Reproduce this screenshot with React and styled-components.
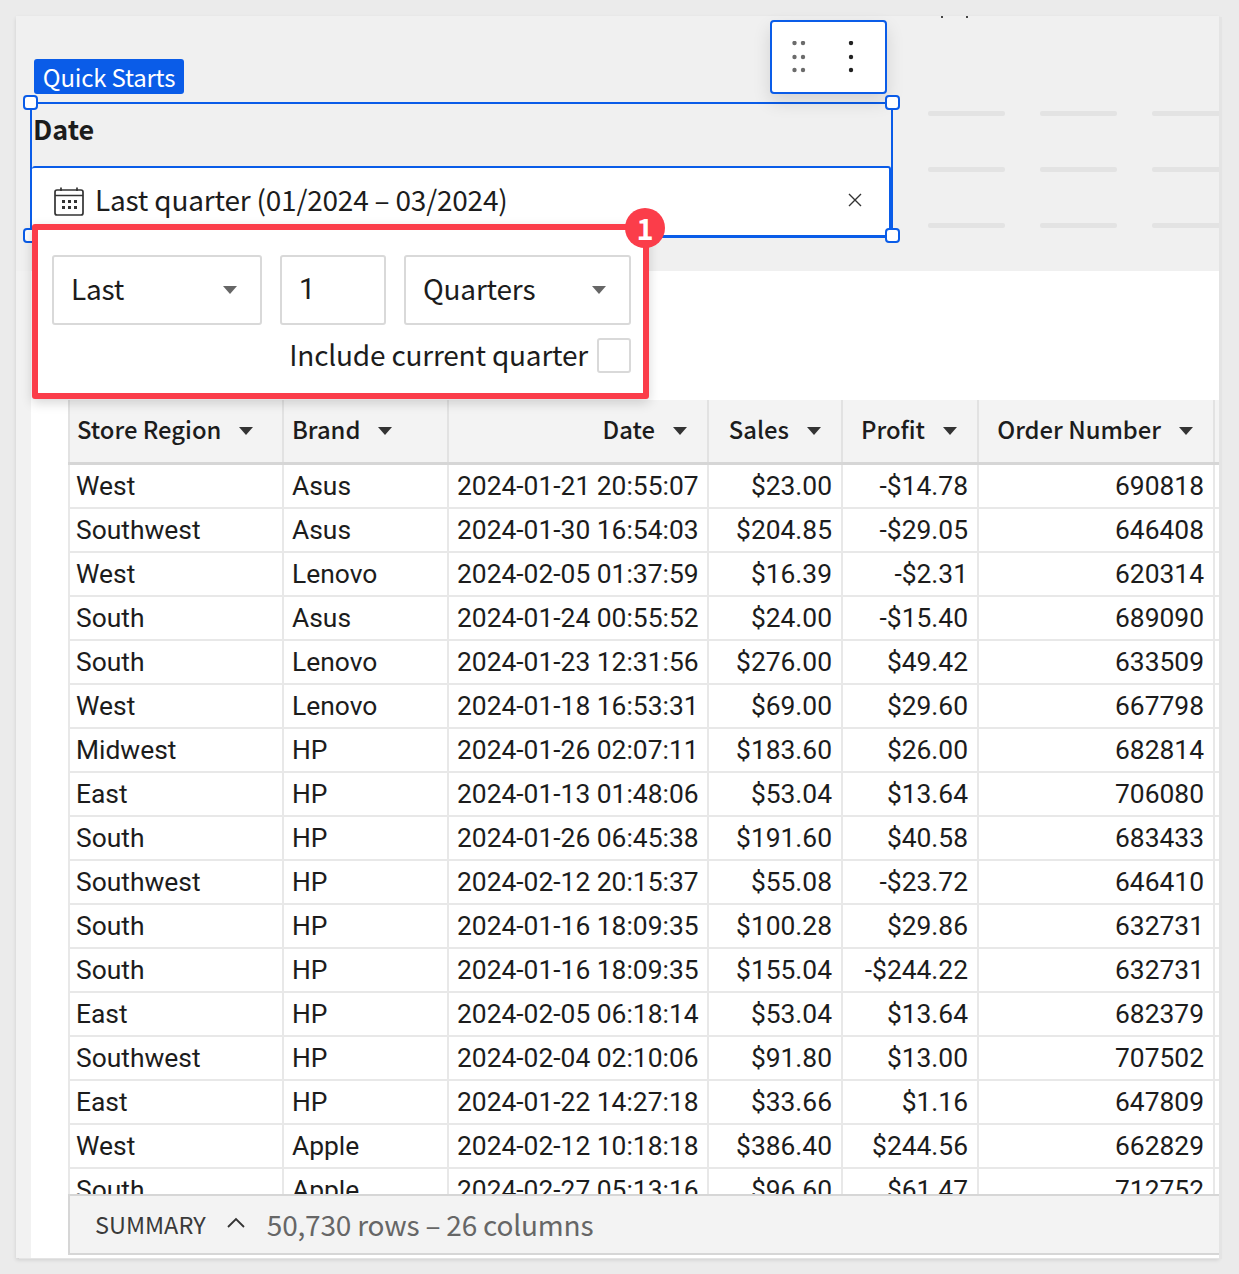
import React from "react";
import styled, { createGlobalStyle } from "styled-components";

const UI_FONT = `"Noto Sans CJK JP", "Noto Sans", sans-serif`;
const BLUE = "#0a5ce8";
const RED = "#fb3d4a";

const columns = "214px 165px 260px 134px 136px 236px 1fr";

const rows = [
  ["West", "Asus", "2024-01-21 20:55:07", "$23.00", "-$14.78", "690818"],
  ["Southwest", "Asus", "2024-01-30 16:54:03", "$204.85", "-$29.05", "646408"],
  ["West", "Lenovo", "2024-02-05 01:37:59", "$16.39", "-$2.31", "620314"],
  ["South", "Asus", "2024-01-24 00:55:52", "$24.00", "-$15.40", "689090"],
  ["South", "Lenovo", "2024-01-23 12:31:56", "$276.00", "$49.42", "633509"],
  ["West", "Lenovo", "2024-01-18 16:53:31", "$69.00", "$29.60", "667798"],
  ["Midwest", "HP", "2024-01-26 02:07:11", "$183.60", "$26.00", "682814"],
  ["East", "HP", "2024-01-13 01:48:06", "$53.04", "$13.64", "706080"],
  ["South", "HP", "2024-01-26 06:45:38", "$191.60", "$40.58", "683433"],
  ["Southwest", "HP", "2024-02-12 20:15:37", "$55.08", "-$23.72", "646410"],
  ["South", "HP", "2024-01-16 18:09:35", "$100.28", "$29.86", "632731"],
  ["South", "HP", "2024-01-16 18:09:35", "$155.04", "-$244.22", "632731"],
  ["East", "HP", "2024-02-05 06:18:14", "$53.04", "$13.64", "682379"],
  ["Southwest", "HP", "2024-02-04 02:10:06", "$91.80", "$13.00", "707502"],
  ["East", "HP", "2024-01-22 14:27:18", "$33.66", "$1.16", "647809"],
  ["West", "Apple", "2024-02-12 10:18:18", "$386.40", "$244.56", "662829"],
  ["South", "Apple", "2024-02-27 05:13:16", "$96.60", "$61.47", "712752"],
];

const headers = [
  { label: "Store Region" },
  { label: "Brand" },
  { label: "Date", right: true },
  { label: "Sales", right: true },
  { label: "Profit", right: true },
  { label: "Order Number", right: true },
];

const GlobalStyle = createGlobalStyle`
  html, body {
    margin: 0;
    padding: 0;
    background: #ebebeb;
  }
  * { box-sizing: border-box; }
`;

const Page = styled.div`
  width: 1239px;
  height: 1274px;
  padding: 16px 0 0 16px;
  font-family: ${UI_FONT};
  color: #1c1c1c;
`;

const Frame = styled.div`
  position: relative;
  width: 1203px;
  height: 1242px;
  display: flex;
  flex-direction: column;
  background: #f2f2f2;
  box-shadow: 3px 1px 0 #e4e4e4, 0 2px 4px rgba(0, 0, 0, 0.12);
`;

const Band = styled.div`
  height: 255px;
  flex-shrink: 0;
  display: flex;
  background: #f0f0f0;
  padding: 43px 0 0 14px;
  overflow: hidden;
`;

const FilterColumn = styled.div`
  width: 863px;
  flex-shrink: 0;
`;

const Tag = styled.div`
  width: 150px;
  height: 35px;
  margin-left: 4px;
  margin-bottom: 8px;
  background: ${BLUE};
  color: #fff;
  border-radius: 3px;
  font-size: 24px;
  letter-spacing: -0.2px;
  line-height: 35px;
  text-align: center;
  white-space: nowrap;
`;

const Selection = styled.div`
  position: relative;
  height: 136px;
  border: 2px solid ${BLUE};
  border-bottom: 0;
`;

const Handle = styled.div`
  position: absolute;
  width: 15px;
  height: 15px;
  background: #fff;
  border: 2px solid ${BLUE};
  border-radius: 4px;
  z-index: 2;
  ${(p) => (p.$bottom ? "bottom: -5px;" : "top: -9px;")}
  ${(p) => (p.$right ? "right: -9px;" : "left: -9px;")}
`;

const FieldLabel = styled.div`
  height: 62px;
  padding-left: 1px;
  font-size: 27px;
  font-weight: 700;
  line-height: 50px;
`;

const DateField = styled.div`
  height: 72px;
  display: flex;
  align-items: center;
  background: #fff;
  border-top: 2px solid ${BLUE};
  border-right: 2px solid ${BLUE};
  border-bottom: 3px solid ${BLUE};
  border-radius: 3px 3px 0 0;
  padding: 0 27px 0 22px;
  font-size: 28px;
  letter-spacing: -0.2px;
`;

const DateText = styled.span`
  flex: 1;
  margin: 0 0 6px 11px;
`;

const SkeletonGrid = styled.div`
  display: grid;
  grid-template-columns: repeat(3, 77px);
  column-gap: 35px;
  row-gap: 51px;
  margin: 52px 0 0 35px;
  align-content: start;
`;

const SkeletonLine = styled.div`
  width: 77px;
  height: 5px;
  background: #e3e3e3;
  border-radius: 2px;
`;

const Toolbar = styled.div`
  position: absolute;
  left: 754px;
  top: 4px;
  width: 117px;
  height: 74px;
  background: #fff;
  border: 2px solid ${BLUE};
  border-radius: 4px;
  box-shadow: 0 8px 18px rgba(0, 0, 0, 0.12);
  display: flex;
  align-items: center;
  padding-left: 20px;
  gap: 42px;
`;

const Specks = styled.div`
  position: absolute;
  left: 925px;
  top: 0;
  width: 27px;
  height: 2px;
  display: flex;
  justify-content: space-between;
`;

const Speck = styled.div`
  width: 2px;
  height: 2px;
  background: #444;
`;

const Popover = styled.div`
  position: absolute;
  left: 16px;
  top: 208px;
  width: 617px;
  height: 175px;
  padding: 25px 12px 0 14px;
  background: #fff;
  border: 6px solid ${RED};
  border-radius: 3px;
  box-shadow: 0 4px 12px rgba(0, 0, 0, 0.16);
  z-index: 3;
`;

const PopoverRow = styled.div`
  display: flex;
  gap: 18px;
`;

const Box = styled.div`
  width: ${(p) => p.$width}px;
  height: 70px;
  display: flex;
  align-items: center;
  justify-content: space-between;
  padding: 0 22px 0 17px;
  border: 2px solid #d9d9d9;
  border-radius: 3px;
`;

const BoxText = styled.span`
  font-size: 28px;
  letter-spacing: -0.2px;
  margin-bottom: 4px;
`;

const NumberText = styled.span`
  font-family: Roboto, sans-serif;
  font-size: 29px;
  margin-bottom: 2px;
`;

const CheckRow = styled.div`
  display: flex;
  justify-content: flex-end;
  align-items: center;
  gap: 9px;
  margin-top: 13px;
`;

const CheckLabel = styled.span`
  font-size: 28px;
  letter-spacing: -0.2px;
  line-height: 33px;
  margin-bottom: 2px;
`;

const CheckBox = styled.div`
  width: 34px;
  height: 35px;
  border: 2px solid #d9d9d9;
  border-radius: 3px;
`;

const Badge = styled.div`
  position: absolute;
  left: 609px;
  top: 192px;
  width: 40px;
  height: 40px;
  border-radius: 50%;
  background: ${RED};
  color: #fff;
  font-size: 29px;
  font-weight: 700;
  line-height: 39px;
  text-align: center;
  z-index: 4;
`;

const Content = styled.div`
  flex: 1;
  min-height: 0;
  margin-left: 15px;
  padding: 129px 0 3px 37px;
  background: #fff;
  display: flex;
  flex-direction: column;
`;

const TableWrap = styled.div`
  flex: 1;
  min-height: 0;
  overflow: hidden;
`;

const HeaderRow = styled.div`
  display: grid;
  grid-template-columns: ${columns};
  height: 65px;
  background: #f3f3f3;
  border-bottom: 3px solid #d6d6d6;
`;

const HeaderCell = styled.div`
  display: flex;
  align-items: center;
  justify-content: ${(p) => (p.$right ? "flex-end" : "flex-start")};
  gap: 18px;
  padding: 0 20px 0 8px;
  border-left: 2px solid #e2e2e2;
  white-space: nowrap;
  &:first-child {
    padding-left: 7px;
  }
`;

const HeaderLabel = styled.span`
  font-size: 23.8px;
  font-weight: 500;
  color: #1c1c1c;
  margin-bottom: 5px;
`;

const DataRow = styled.div`
  display: grid;
  grid-template-columns: ${columns};
  height: 44px;
  border-bottom: 2px solid #e8e8e8;
`;

const DataCell = styled.div`
  padding: 0 ${(p) => (p.$right ? "9px" : "8px")} 0 8px;
  border-left: 2px solid #e8e8e8;
  font-family: Roboto, sans-serif;
  font-size: 26.4px;
  line-height: 43px;
  text-align: ${(p) => (p.$right ? "right" : "left")};
  white-space: nowrap;
  color: #1c1c1c;
  &:first-child {
    padding-left: 6px;
  }
`;

const Summary = styled.div`
  height: 61px;
  flex-shrink: 0;
  display: flex;
  align-items: center;
  padding-left: 25px;
  background: #f3f3f3;
  border-top: 2px solid #d6d6d6;
  border-left: 2px solid #d6d6d6;
  border-bottom: 2px solid #d6d6d6;
`;

const SummaryLabel = styled.span`
  font-size: 23.5px;
  color: #3a3a3a;
  margin-bottom: 2px;
`;

const SummaryCount = styled.span`
  font-size: 28px;
  letter-spacing: -0.2px;
  color: #666;
  margin: 0 0 2px 22px;
`;

const Caret = ({ color = "#333", width = 14 }) => (
  <svg width={width} height="8" viewBox="0 0 14 8" style={{ flexShrink: 0 }}>
    <path d="M0 0 H14 L7 8 Z" fill={color} />
  </svg>
);

const CalendarIcon = () => (
  <svg width="30" height="29" viewBox="0 0 30 29" fill="none" stroke="#333" strokeWidth="1.7">
    <rect x="1" y="3" width="28" height="25" rx="2" />
    <path d="M1 8.5 H29 M7 0.5 V4 M23 0.5 V4" />
    <g fill="#333" stroke="none">
      <rect x="8" y="13" width="3" height="3" />
      <rect x="14" y="13" width="3" height="3" />
      <rect x="20" y="13" width="3" height="3" />
      <rect x="8" y="19" width="3" height="3" />
      <rect x="14" y="19" width="3" height="3" />
      <rect x="20" y="19" width="3" height="3" />
    </g>
  </svg>
);

const CloseIcon = () => (
  <svg width="14" height="14" viewBox="0 0 14 14" stroke="#333" strokeWidth="1.4" style={{ marginBottom: 3 }}>
    <path d="M1 1 L13 13 M13 1 L1 13" />
  </svg>
);

const ChevronUp = () => (
  <svg width="18" height="11" viewBox="0 0 18 11" fill="none" stroke="#333" strokeWidth="1.8" style={{ marginLeft: 21, marginBottom: 4 }}>
    <path d="M1 10 L9 2 L17 10" />
  </svg>
);

const DragDots = () => (
  <svg width="14" height="32" viewBox="0 0 14 32" fill="#6b6b6b">
    {[4, 18, 31].map((y) =>
      [2.5, 11].map((x) => <circle key={`${x}-${y}`} cx={x} cy={y - 2} r="2.2" />)
    )}
  </svg>
);

const KebabDots = () => (
  <svg width="6" height="32" viewBox="0 0 6 32" fill="#222">
    {[2, 16, 29].map((y) => (
      <circle key={y} cx="3" cy={y} r="2.2" />
    ))}
  </svg>
);

export default function App() {
  return (
    <Page>
      <GlobalStyle />
      <Frame>
        <Band>
          <FilterColumn>
            <Tag>Quick Starts</Tag>
            <Selection>
              <Handle />
              <Handle $right />
              <Handle $bottom />
              <Handle $bottom $right />
              <FieldLabel>Date</FieldLabel>
              <DateField>
                <CalendarIcon />
                <DateText>Last quarter (01/2024 – 03/2024)</DateText>
                <CloseIcon />
              </DateField>
            </Selection>
          </FilterColumn>
          <SkeletonGrid>
            {Array.from({ length: 9 }).map((_, i) => (
              <SkeletonLine key={i} />
            ))}
          </SkeletonGrid>
        </Band>
        <Content>
          <TableWrap>
            <HeaderRow>
              {headers.map((h) => (
                <HeaderCell key={h.label} $right={h.right}>
                  <HeaderLabel>{h.label}</HeaderLabel>
                  <Caret />
                </HeaderCell>
              ))}
              <HeaderCell />
            </HeaderRow>
            {rows.map((row, i) => (
              <DataRow key={i}>
                {row.map((value, j) => (
                  <DataCell key={j} $right={j > 1}>
                    {value}
                  </DataCell>
                ))}
                <DataCell />
              </DataRow>
            ))}
          </TableWrap>
          <Summary>
            <SummaryLabel>SUMMARY</SummaryLabel>
            <ChevronUp />
            <SummaryCount>50,730 rows – 26 columns</SummaryCount>
          </Summary>
        </Content>
        <Specks>
          <Speck />
          <Speck />
        </Specks>
        <Toolbar>
          <DragDots />
          <KebabDots />
        </Toolbar>
        <Popover>
          <PopoverRow>
            <Box $width={210}>
              <BoxText>Last</BoxText>
              <Caret color="#666" width={16} />
            </Box>
            <Box $width={106}>
              <NumberText>1</NumberText>
            </Box>
            <Box $width={227}>
              <BoxText>Quarters</BoxText>
              <Caret color="#666" width={16} />
            </Box>
          </PopoverRow>
          <CheckRow>
            <CheckLabel>Include current quarter</CheckLabel>
            <CheckBox />
          </CheckRow>
        </Popover>
        <Badge>1</Badge>
      </Frame>
    </Page>
  );
}
